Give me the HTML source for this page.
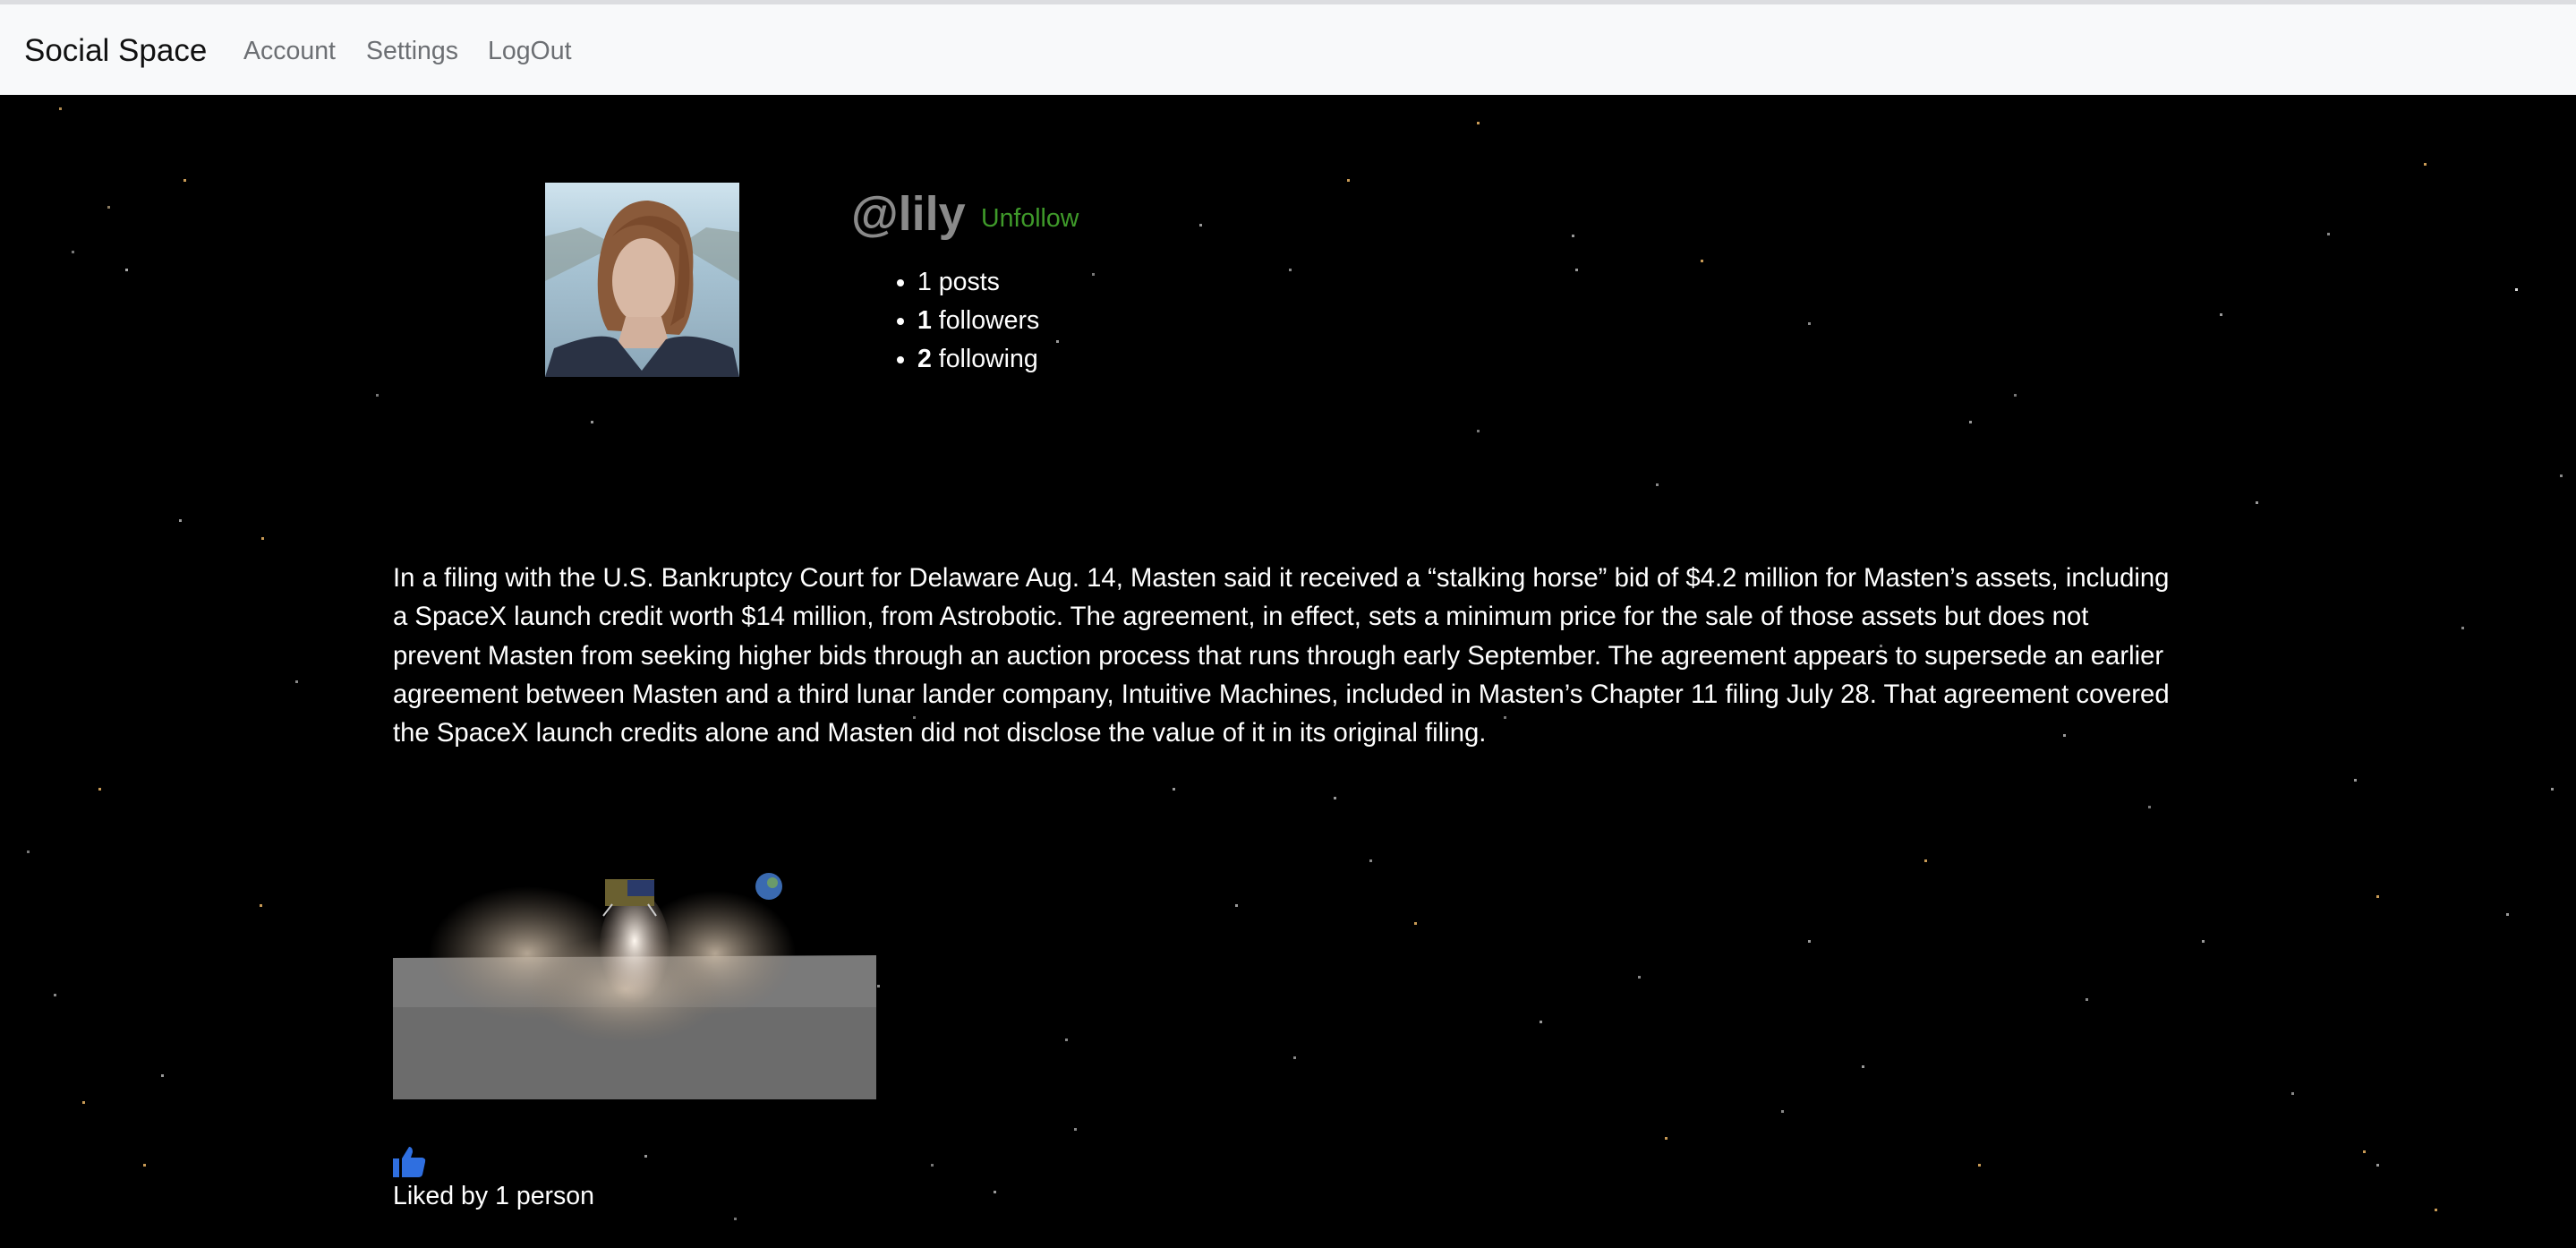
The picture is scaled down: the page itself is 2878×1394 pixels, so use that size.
<!DOCTYPE html>
<html><head><meta charset="utf-8">
<style>
html,body{margin:0;padding:0;width:2878px;height:1394px;overflow:hidden;background:#000;font-family:"Liberation Sans",Arial,sans-serif;}
.topline{position:absolute;left:0;top:0;width:2878px;height:5px;background:#dcdde0;}
.nav{position:absolute;left:0;top:5px;width:2878px;height:101px;background:#f8f9fa;}
.brand{position:absolute;left:27px;top:32px;font-size:35px;color:#111;}
.nl{position:absolute;top:36px;font-size:28.5px;color:#6c6f73;}
.stars{position:absolute;left:0;top:0;width:3px;height:3px;background:transparent;}
.av{position:absolute;left:609px;top:204px;width:217px;height:217px;overflow:hidden;background:linear-gradient(#cfe3ee,#a8c4d4 40%,#9bb6c6 70%,#8aa6b8);}
.name{position:absolute;left:951px;top:208px;font-size:54px;font-weight:bold;color:#8a8a8a;}
.unf{position:absolute;left:1096px;top:228px;font-size:28.5px;color:#3f9a2a;}
ul{position:absolute;left:993px;top:294px;margin:0;padding:0 0 0 32px;color:#fff;font-size:28.5px;line-height:43px;}
.post{position:absolute;left:439px;top:624px;color:#fff;font-size:29.3px;line-height:43.3px;white-space:nowrap;}
.img{position:absolute;left:439px;top:955px;width:540px;height:273px;overflow:hidden;background:#000;}
.liked{position:absolute;left:439px;top:1320px;color:#fff;font-size:28.5px;}
</style></head><body>
<div class="stars" style="box-shadow:
66px 120px #b08a50,120px 230px #8a7a60,205px 200px #c89a55,80px 280px #777,140px 300px #aaa,292px 600px #c89a55,200px 580px #999,110px 880px #c89a55,330px 760px #888,290px 1010px #c89a55,180px 1200px #999,92px 1230px #c89a55,160px 1300px #c89a55,60px 1110px #888,30px 950px #777,
420px 440px #777,505px 770px #888,660px 470px #999,1000px 780px #888,1020px 800px #777,1180px 380px #999,1220px 305px #777,1650px 136px #c89a55,1505px 200px #c89a55,1760px 300px #999,1900px 290px #c89a55,1756px 262px #999,2020px 360px #888,2200px 470px #999,2250px 440px #777,2480px 350px #999,2708px 182px #c89a55,2810px 322px #ddd,2600px 260px #888,2520px 560px #999,2750px 700px #888,2630px 870px #999,2655px 1000px #c89a55,2800px 1020px #999,2460px 1050px #999,2330px 1115px #888,2210px 1300px #c89a55,2080px 1190px #999,1990px 1240px #888,1860px 1270px #c89a55,1720px 1140px #999,1580px 1030px #c89a55,1530px 960px #888,1380px 1010px #999,1310px 880px #999,1190px 1160px #888,1110px 1330px #999,1200px 1260px #888,2640px 1285px #c89a55,2655px 1300px #999,2560px 1220px #888,2400px 900px #777,2720px 1350px #c89a55,2850px 880px #999,2860px 530px #888,2020px 1050px #999,1830px 1090px #888,1680px 800px #777,1490px 890px #999,1445px 1180px #888,980px 1100px #888,1040px 1300px #777,720px 1290px #999,820px 1360px #777,1340px 250px #999,1440px 300px #888,1650px 480px #777,1850px 540px #888,2100px 720px #777,2305px 820px #999,2150px 960px #c89a55;"></div>
<div class="topline"></div>
<div class="nav">
<div class="brand">Social Space</div>
<div class="nl" style="left:272px">Account</div>
<div class="nl" style="left:409px">Settings</div>
<div class="nl" style="left:545px">LogOut</div>
</div>
<div class="av">
<svg width="217" height="217" viewBox="0 0 217 217">
<path d="M0 60 L40 50 L80 70 L0 110Z" fill="#8c9a94" opacity=".6"/>
<path d="M217 55 L180 50 L150 70 L217 110Z" fill="#8c9a94" opacity=".6"/>
<path d="M60 90 Q70 20 115 20 Q170 25 165 100 Q168 150 150 170 L70 165 Q55 140 60 90Z" fill="#8a5a3a"/>
<ellipse cx="110" cy="110" rx="35" ry="48" fill="#d8b8a4"/>
<path d="M90 150 L130 150 L140 185 L80 185Z" fill="#d2b09c"/>
<path d="M0 217 L10 185 Q60 165 80 175 L108 210 L135 175 Q165 165 210 185 L217 217Z" fill="#2a3244"/>
<path d="M75 60 Q110 30 150 70 Q150 130 140 160 L155 150 Q170 90 150 50 Q110 20 75 60Z" fill="#7a4a2c"/>
</svg>
</div>
<div class="name">@lily</div>
<div class="unf">Unfollow</div>
<ul><li>1 posts</li><li><b>1</b> followers</li><li><b>2</b> following</li></ul>
<div class="post">In a filing with the U.S. Bankruptcy Court for Delaware Aug. 14, Masten said it received a “stalking horse” bid of $4.2 million for Masten’s assets, including<br>a SpaceX launch credit worth $14 million, from Astrobotic. The agreement, in effect, sets a minimum price for the sale of those assets but does not<br>prevent Masten from seeking higher bids through an auction process that runs through early September. The agreement appears to supersede an earlier<br>agreement between Masten and a third lunar lander company, Intuitive Machines, included in Masten’s Chapter 11 filing July 28. That agreement covered<br>the SpaceX launch credits alone and Masten did not disclose the value of it in its original filing.</div>
<div class="img">
<svg width="540" height="273" viewBox="0 0 540 273">
<defs><radialGradient id="d" cx="50%" cy="50%" r="50%"><stop offset="0" stop-color="#c8b8a4" stop-opacity=".9"/><stop offset="1" stop-color="#8a7a68" stop-opacity="0"/></radialGradient>
<radialGradient id="f" cx="50%" cy="40%" r="50%"><stop offset="0" stop-color="#fff8f0"/><stop offset="1" stop-color="#e0c8b8" stop-opacity="0"/></radialGradient></defs>
<rect width="540" height="273" fill="#000"/>
<path d="M0 115 L540 112 L540 273 L0 273Z" fill="#7a7a7a"/>
<rect y="170" width="540" height="103" fill="#5e5e5e" opacity=".5"/>
<ellipse cx="150" cy="110" rx="110" ry="75" fill="url(#d)"/>
<ellipse cx="360" cy="110" rx="90" ry="70" fill="url(#d)"/>
<ellipse cx="260" cy="150" rx="110" ry="60" fill="url(#d)"/>
<ellipse cx="270" cy="110" rx="40" ry="70" fill="url(#f)"/>
<rect x="237" y="27" width="55" height="30" fill="#6a6030"/>
<rect x="262" y="28" width="30" height="18" fill="#2a3a6a"/>
<path d="M235 68 L245 55 M294 68 L285 55" stroke="#ccc" stroke-width="2"/>
<circle cx="420" cy="35" r="15" fill="#3a6ab0"/>
<circle cx="424" cy="31" r="6" fill="#6a9a6a"/>
</svg>
</div>
<svg style="position:absolute;left:439px;top:1279px" width="37" height="37" viewBox="0 0 37 37">
<rect x="0" y="15" width="7" height="21" fill="#2f6fe0"/>
<path d="M10 15 L18 2 Q22 2 22 8 L20 14 L33 14 Q37 15 36 19 L33 33 Q32 36 28 36 L10 36Z" fill="#2f6fe0"/>
</svg>
<div class="liked">Liked by 1 person</div>
</body></html>
